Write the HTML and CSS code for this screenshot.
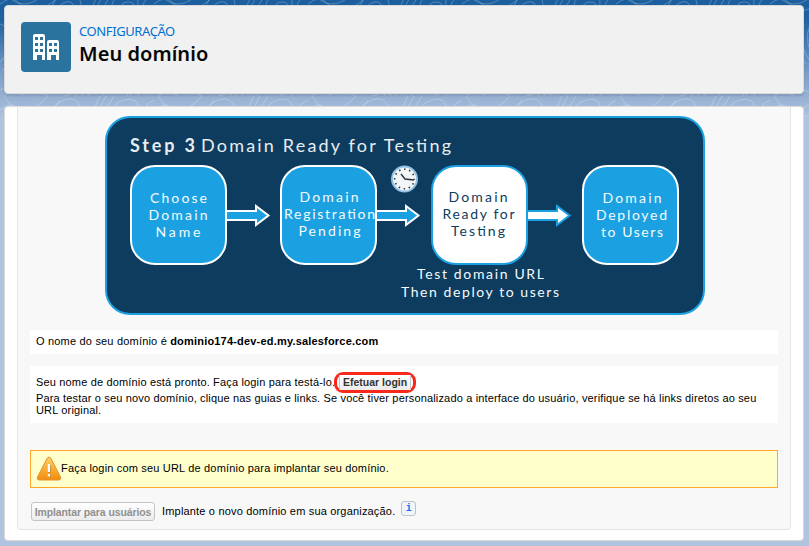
FILE: index.html
```html
<!DOCTYPE html>
<html lang="pt-BR">
<head>
<meta charset="utf-8">
<title>Meu domínio</title>
<link rel="stylesheet" href="styles.css">
</head>
<body>
<svg class="backdrop" width="809" height="160" viewBox="0 0 809 160" aria-hidden="true">
  <defs>
    <pattern id="contours" width="154" height="106" y="-10" patternUnits="userSpaceOnUse">
      <g fill="none" stroke="#fff" stroke-opacity=".24" stroke-width="1">
        <path d="M0 14q12-10 20 0t22 4 18-14M4 0q8 14 20 14t24-14M50 24q2-16 14-20t16 6-8 16M56 24q2-10 10-12t8 8M88 26l12-26M92 26l14-26M98 26l16-26M112 26q-4-18 12-22t14 12-10 12M120 22q0-10 8-10t6 8M142 26q-2-16 12-22"/>
        <path d="M0 34q16 4 10 20T0 72M4 30q20 8 14 28T2 80M150 28q-12 10-6 24t10 22M154 44q-8 8 0 20M28 34q-8 20 8 40M34 34q-8 20 8 40M40 34q-8 20 8 40"/>
        <path d="M0 100q14-10 26-4t22 10M4 106q10-8 20 0M46 102q-8-10 6-12t20 6-8 10M54 102q-2-6 6-6t8 6M76 106q6-18 16-18M82 106q6-14 16-18M88 106q8-14 18-18M104 106q-4-16 10-16t14 10-6 6M112 104q-2-8 6-8t4 8M130 106q4-20 24-12M138 106q4-12 16-6"/>
      </g>
    </pattern>
  </defs>
  <rect width="809" height="126" fill="url(#contours)"/>
</svg>
<div class="page">
  <header class="page-header">
    <div class="header-icon">
      <svg width="50" height="50" viewBox="0 0 50 50">
        <path fill="#fff" fill-rule="evenodd" d="M14 12h8q2 0 2 2v24h-3v-5h-5v5h-4V14q0-2 2-2zM14 15v3h3v-3zm5 0v3h3v-3zm-5 6v3h3v-3zm5 0v3h3v-3zm-5 6v3h3v-3zm5 0v3h3v-3zM28 18h8q2 0 2 2v18h-3v-5h-5v5h-4V20q0-2 2-2zM28 21v3h3v-3zm5 0v3h3v-3zm-5 6v3h3v-3zm5 0v3h3v-3z"/>
      </svg>
    </div>
    <div class="header-text">
      <div class="eyebrow">CONFIGURAÇÃO</div>
      <h1>Meu domínio</h1>
    </div>
  </header>
  <main class="card">
    <section class="content">
      <svg class="steps" width="600" height="199" viewBox="105 116 600 199">
        <rect x="106" y="117" width="598" height="197" rx="24" fill="#0d3c5e" stroke="#1ba1e2" stroke-width="2"/>
        <g class="steps-title">
          <text x="130" y="152" font-weight="700" textLength="65">Step 3</text>
          <text x="201" y="152" textLength="250">Domain Ready for Testing</text>
        </g>
        <g stroke="#fff" stroke-width="2" fill="#1ba1e2">
          <rect x="131" y="166" width="95" height="98" rx="24"/>
          <rect x="281" y="166" width="95" height="98" rx="24"/>
          <rect x="432" y="166" width="95" height="98" rx="24" fill="#fff" stroke="#1ba1e2"/>
          <rect x="583" y="166" width="95" height="98" rx="24"/>
          <path d="M227 211h29v-5l12.500 9.500-12.500 9.500v-5h-29"/>
          <path d="M377 211h29v-5l12.500 9.500-12.500 9.500v-5h-29"/>
          <path fill="#fff" stroke="#1ba1e2" d="M528 211h29v-5l12.500 9.500-12.500 9.500v-5h-29"/>
        </g>
        <g class="steps-label">
          <text x="150" y="203" textLength="57">Choose</text>
          <text x="148.500" y="220" textLength="59">Domain</text>
          <text x="155.500" y="237" textLength="45">Name</text>
          <text x="299.500" y="202" textLength="59">Domain</text>
          <text x="284" y="219" textLength="91">Registration</text>
          <text x="298.500" y="236" textLength="62">Pending</text>
          <g class="steps-current">
            <text x="448.500" y="202" textLength="59">Domain</text>
            <text x="442.500" y="219" textLength="72">Ready for</text>
            <text x="451" y="236" textLength="54">Testing</text>
          </g>
          <text x="602.500" y="203" textLength="59">Domain</text>
          <text x="596" y="220" textLength="71">Deployed</text>
          <text x="601" y="237" textLength="62">to Users</text>
          <text x="417" y="279" textLength="127">Test domain URL</text>
          <text x="401" y="297" textLength="158">Then deploy to users</text>
        </g>
        <circle cx="404.500" cy="179" r="12.500" fill="#f3f6f7" stroke="#8fc1e6" stroke-width="2"/>
        <circle cx="404.500" cy="179" r="9.800" fill="none" stroke="#26333d" stroke-width="1.600" stroke-dasharray="1.500 3.631" stroke-dashoffset=".75"/>
        <path d="M401 174l4 5 9 1" fill="none" stroke="#26333d" stroke-width="1.400"/>
      </svg>
      <div class="panel panel-name"><span class="t-name">O nome do seu domínio é <b>dominio174-dev-ed.my.salesforce.com</b></span></div>
      <div class="panel panel-ready">
        <div class="ready-row"><span class="t-ready">Seu nome de domínio está pronto. Faça login para testá-lo.</span><span class="ring"><button class="btn" type="button">Efetuar login</button></span></div>
        <p class="hint">Para testar o seu novo domínio, clique nas guias e links. Se você tiver personalizado a interface do usuário, verifique se há links diretos ao seu<br>URL original.</p>
      </div>
      <div class="warning">
        <svg width="26" height="26" viewBox="0 0 26 26">
          <defs><linearGradient id="amber" x1="0" y1="0" x2="0" y2="1"><stop offset="0" stop-color="#ffd06a"/><stop offset=".6" stop-color="#f9a72b"/><stop offset="1" stop-color="#f28c13"/></linearGradient></defs>
          <path d="M11.200 2.200q1.800-2.400 3.600 0l9.800 19q.8 2.800-1.800 2.800H3.200q-2.600 0-1.800-2.800z" fill="url(#amber)" stroke="#e2922d"/>
          <path d="M13.600 9v7.500M13.600 18.500v2.500" stroke="#b8771e" stroke-width="2.600"/>
          <path d="M13 8v8M13 18v2.500" stroke="#fff" stroke-width="2.400"/>
        </svg>
        <span class="t-warn">Faça login com seu URL de domínio para implantar seu domínio.</span>
      </div>
      <div class="deploy">
        <button class="btn btn-deploy" type="button" disabled>Implantar para usuários</button>
        <span class="t-deploy">Implante o novo domínio em sua organização.</span>
        <span class="info">i</span>
      </div>
    </section>
  </main>
</div>
</body>
</html>
```
FILE: styles.css
```css
* { box-sizing: border-box; }
body {
  margin: 0;
  height: 546px;
  overflow: hidden;
  color: #000;
  font: 11px/12px "Liberation Sans", Arial, sans-serif;
  letter-spacing: .16px;
  background: #b0c4df linear-gradient(#1b5f9e 0, #1f62a0 20px, #7f9fc9 75px, #b0c4df 120px) no-repeat;
}
.backdrop { position: absolute; top: 0; left: 0; }
.page { position: relative; padding: 5px 5px 0 4px; }
.page-header {
  display: flex;
  height: 89px;
  padding: 16px;
  border: 1px solid #d8dadc;
  border-radius: 4px;
  background: #f1f1f1;
  box-shadow: 0 2px 2px rgba(0, 0, 0, .12);
}
.header-icon {
  width: 50px;
  height: 50px;
  border-radius: 4px;
  background: #2a739e;
}
.header-text { padding-left: 8px; }
.eyebrow {
  color: #0070d2;
  font: 13px/18px "Noto Sans", sans-serif;
  letter-spacing: -.4px;
}
h1 {
  margin: 0;
  color: #080707;
  font: 600 20px/27px "Noto Sans", sans-serif;
  letter-spacing: .05px;
}
.card {
  height: 435px;
  margin-top: 12px;
  padding: 0 12px;
  border: 1px solid #dddbda;
  border-radius: 4px;
  background: #fff;
}
.content {
  height: 423px;
  padding: 9px 12px 0;
  border: 1px solid #e5e5e5;
  border-top: 0;
  border-radius: 0 0 4px 4px;
  background: #f8f8f8;
}
.steps {
  display: block;
  margin-left: 75px;
  letter-spacing: 0;
  font-variant-ligatures: none;
}
.steps-title { fill: #e8edf1; font: 18px "Lato", sans-serif; }
.steps-label { fill: #f4fafd; font: 14px "Lato", sans-serif; }
.steps-current { fill: #0d3c5e; }
.panel { padding: 0 6px; background: #fff; }
.panel-name { height: 24px; margin-top: 15px; line-height: 23px; letter-spacing: .19px; }
.panel-ready { height: 57px; margin-top: 12px; padding-top: 6px; }
.ready-row { display: flex; align-items: center; height: 21px; }
.t-ready { margin-top: -1px; }
.ring {
  display: flex;
  align-items: center;
  justify-content: center;
  width: 82px;
  height: 21px;
  margin-left: -1px;
  border: 3px solid #f8291b;
  border-radius: 9px;
}
.btn {
  height: 15px;
  padding: 0 3px;
  border: 1px solid #c9c9c9;
  border-width: 0 1px;
  background: linear-gradient(#fff, #ececec);
  color: #333;
  font: bold 10.500px/15px "Liberation Sans", Arial, sans-serif;
  white-space: nowrap;
}
.hint { margin: -1px 0 0; white-space: nowrap; }
.warning {
  display: flex;
  align-items: center;
  height: 38px;
  margin-top: 27px;
  padding-left: 5px;
  border: 1px solid #ffa62b;
  background: #ffffcc;
}
.t-warn { margin: -3px 0 0 -1px; letter-spacing: .18px; }
.deploy { display: flex; align-items: center; margin: 14px 0 0 1px; }
.btn-deploy {
  width: 124px;
  height: 19px;
  padding: 0;
  border: 1px solid #c4c4c4;
  border-radius: 3px;
  color: #909090;
  line-height: 18px;
  letter-spacing: -.1px;
}
.t-deploy { margin: -1px 0 0 7px; letter-spacing: .18px; }
.info {
  width: 15px;
  height: 15px;
  margin: -7px 0 0 6px;
  border: 1px solid #bfc3c9;
  border-radius: 3px;
  background: #f1f4f8;
  color: #0875e8;
  font: bold 10px/14px "Liberation Mono", monospace;
  text-align: center;
}
```
